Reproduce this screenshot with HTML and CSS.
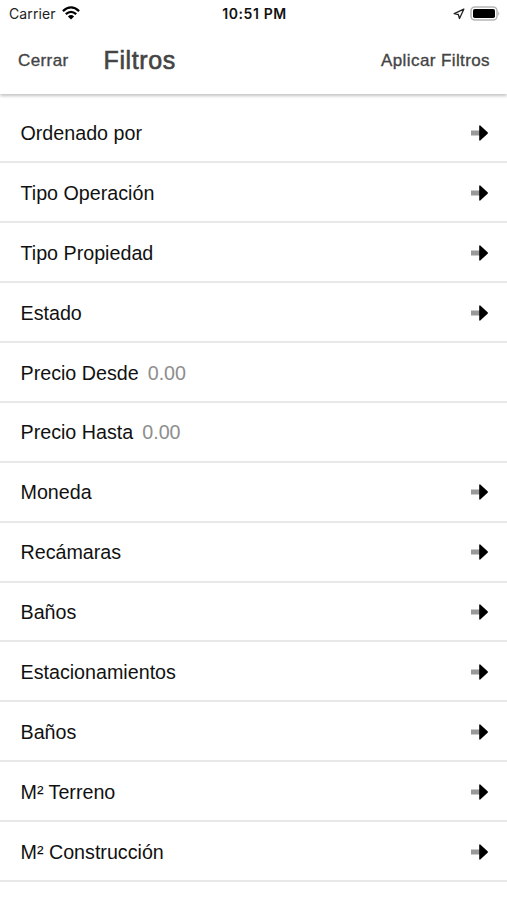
FILE: index.html
```html
<!DOCTYPE html>
<html lang="es">
<head>
    <meta charset="UTF-8">
    <meta name="viewport" content="width=device-width, initial-scale=1.0">
    <title>Filtros</title>
    <link rel="stylesheet" href="styles.css">
</head>
<body>
    <svg width="0" height="0" class="defs">
        <symbol id="arrow" viewBox="0 0 20 18">
            <path d="M1 6.5h9v5H1z" fill="#999"/>
            <path d="M9.2 1.8 Q9.8 .9 10.8 1.9 L17.6 8.2 Q18.4 9 17.6 9.8 L10.8 16.1 Q9.8 17.1 9.2 16.2z" fill="#000"/>
        </symbol>
    </svg>

    <!-- Status bar -->
    <div class="status-bar">
        <div class="status-left">
            <span class="carrier">Carrier</span>
            <svg class="wifi" width="18" height="14" viewBox="0 0 18 14">
                <g fill="none" stroke="#000" stroke-width="2.3">
                    <path d="M0.9 5.1Q9 -2.3 17.1 5.1"/>
                    <path d="M3.8 8.2Q9 3.5 14.2 8.2"/>
                </g>
                <path d="M5.9 10.4Q9 7.8 12.1 10.4L9 13.5z"/>
            </svg>
        </div>
        <span class="time">10:51 PM</span>
        <div class="status-right">
            <svg class="location" width="12" height="12" viewBox="0 0 12 12">
                <path d="M10.8 1.2 1.2 5.7 5.3 6.5 6.5 10.5z" fill="none" stroke="#222" stroke-width="1.3" stroke-linejoin="round"/>
            </svg>
            <svg class="battery" width="31" height="15" viewBox="0 0 31 15">
                <rect x="1" y="1" width="26" height="13" rx="3.8" fill="#fff" stroke="#b5b5b5" stroke-width="1.5"/>
                <rect x="3" y="3" width="22" height="9" rx="1.8"/>
                <path d="M28.3 5.2q2 2.3 0 4.6z" fill="#aaa"/>
            </svg>
        </div>
    </div>

    <!-- Header -->
    <div class="header">
        <span class="header-btn">Cerrar</span>
        <span class="title">Filtros</span>
        <span class="header-btn apply">Aplicar Filtros</span>
    </div>

    <!-- Filter list -->
    <ul class="filter-list">
        <li class="filter-item"><span>Ordenado por</span><svg class="arrow"><use href="#arrow"/></svg></li>
        <li class="filter-item"><span>Tipo Operación</span><svg class="arrow"><use href="#arrow"/></svg></li>
        <li class="filter-item"><span>Tipo Propiedad</span><svg class="arrow"><use href="#arrow"/></svg></li>
        <li class="filter-item"><span>Estado</span><svg class="arrow"><use href="#arrow"/></svg></li>
        <li class="filter-item"><span>Precio Desde</span><span class="value">0.00</span></li>
        <li class="filter-item"><span>Precio Hasta</span><span class="value">0.00</span></li>
        <li class="filter-item"><span>Moneda</span><svg class="arrow"><use href="#arrow"/></svg></li>
        <li class="filter-item"><span>Recámaras</span><svg class="arrow"><use href="#arrow"/></svg></li>
        <li class="filter-item"><span>Baños</span><svg class="arrow"><use href="#arrow"/></svg></li>
        <li class="filter-item"><span>Estacionamientos</span><svg class="arrow"><use href="#arrow"/></svg></li>
        <li class="filter-item"><span>Baños</span><svg class="arrow"><use href="#arrow"/></svg></li>
        <li class="filter-item"><span>M² Terreno</span><svg class="arrow"><use href="#arrow"/></svg></li>
        <li class="filter-item"><span>M² Construcción</span><svg class="arrow"><use href="#arrow"/></svg></li>
    </ul>
</body>
</html>
```
FILE: styles.css
```css
* {
    box-sizing: border-box;
}
body {
    margin: 0;
    height: 900px;
    overflow: hidden;
    background-color: #fff;
    font-family: "Liberation Sans", Arial, sans-serif;
}
.defs {
    display: none;
}
.status-bar {
    height: 27px;
    padding: 0 6px 0 9px;
    display: grid;
    grid-template-columns: 1fr auto 1fr;
    align-items: center;
    font-family: Inter, sans-serif;
    font-size: 14px;
    color: #222;
}
.status-left, .status-right {
    display: flex;
    align-items: center;
}
.carrier {
    letter-spacing: 0.1px;
}
.wifi {
    margin: -2px 0 0 6px;
}
.time {
    font-weight: 600;
    letter-spacing: 0.6px;
    margin-right: 1px;
    color: #111;
}
.status-right {
    justify-content: flex-end;
}
.battery {
    margin-left: 5px;
}
.header {
    height: 67px;
    padding: 0 17px 0 18px;
    display: flex;
    align-items: center;
    color: #444;
    box-shadow: 0 2px 3px rgba(0, 0, 0, 0.24);
    clip-path: inset(0 0 -8px 0);
}
.header-btn {
    font-size: 17px;
    letter-spacing: 0.4px;
    -webkit-text-stroke: 0.35px #444;
}
.title {
    margin-left: 35px;
    font-size: 25px;
    letter-spacing: 0.6px;
    -webkit-text-stroke: 0.6px #444;
}
.apply {
    margin-left: auto;
}
.filter-list {
    list-style-type: none;
    margin: 0;
    padding: 9.6px 0 0;
}
.filter-item {
    height: 59.88px;
    padding: 2px 17px 0 20.5px;
    display: flex;
    align-items: center;
    border-bottom: 2px solid #e8e8e8;
    font-size: 19.7px;
    color: #111;
}
.value {
    margin-left: 9px;
    color: #8e8e8e;
}
.arrow {
    width: 20px;
    height: 18px;
    margin: 0 0 1px auto;
}
```
